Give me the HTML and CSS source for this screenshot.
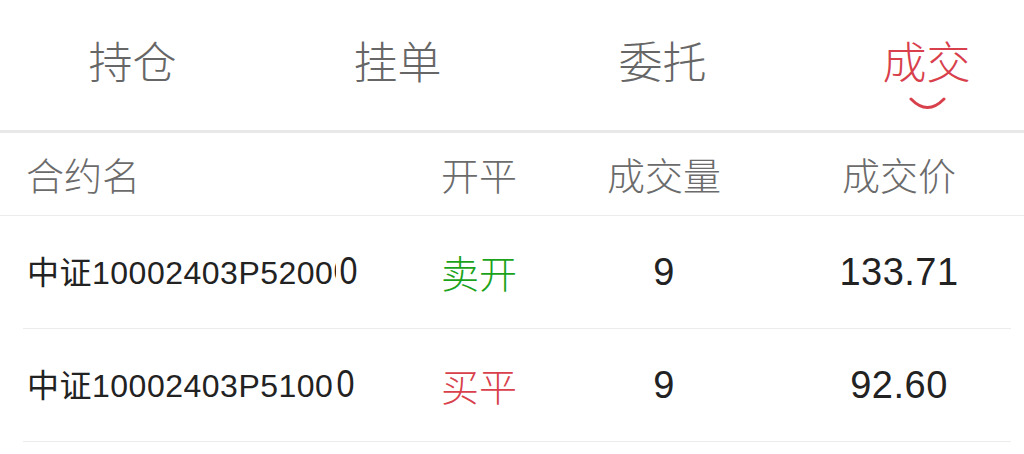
FILE: index.html
```html
<!DOCTYPE html>
<html lang="zh-CN">
<head>
<meta charset="utf-8">
<link rel="stylesheet" href="styles.css">
</head>
<body>
<div class="page">
  <nav class="tabs">
    <div class="tab">持仓</div>
    <div class="tab">挂单</div>
    <div class="tab">委托</div>
    <div class="tab active">成交
      <svg class="smile" width="37" height="14" viewBox="0 0 37 14"><path d="M2 3 Q18.5 20 35 3" fill="none" stroke="#d8404c" stroke-width="3" stroke-linecap="round"/></svg>
    </div>
  </nav>
  <div class="sep"></div>
  <div class="head">
    <div class="c1">合约名</div>
    <div class="cc">开平</div>
    <div class="cc">成交量</div>
    <div class="cc">成交价</div>
  </div>
  <div class="row">
    <div class="c1 name">中证10002403P5200<span class="clip">0</span><span class="big">0</span></div>
    <div class="cc cj green">卖开</div>
    <div class="cc num">9</div>
    <div class="cc num">133.71</div>
  </div>
  <div class="row">
    <div class="c1 name">中证10002403P5100<span class="big">0</span></div>
    <div class="cc cj red">买平</div>
    <div class="cc num">9</div>
    <div class="cc num">92.60</div>
  </div>
</div>
</body>
</html>
```

FILE: styles.css
```css
html, body {
  margin: 0;
  padding: 0;
  background: #fff;
  overflow: hidden;
}
body {
  font-family: "Liberation Sans", "Noto Sans CJK SC", sans-serif;
}
.page {
  width: 1024px;
  height: 454px;
  overflow: hidden;
}
.tabs {
  display: flex;
  height: 130px;
  width: 1060px;
}
.tab {
  width: 265px;
  flex: none;
  position: relative;
  text-align: center;
  font-family: "Noto Sans CJK SC", sans-serif;
  font-weight: 300;
  font-size: 44px;
  line-height: 44px;
  padding-top: 38px;
  color: #666;
  box-sizing: border-box;
}
.tab.active {
  color: #d8404c;
  padding-right: 2px;
}
.smile {
  position: absolute;
  left: 50%;
  top: 96px;
  margin-left: -19px;
}
.sep {
  height: 3px;
  background: #e8e8e8;
}
.head {
  display: grid;
  grid-template-columns: 417px 124px 246px 224px;
  height: 82px;
  align-items: center;
  border-bottom: 1px solid #ececec;
  font-family: "Noto Sans CJK SC", sans-serif;
  font-weight: 300;
  font-size: 38px;
  line-height: 40px;
  color: #6b6b6b;
}
.head .c1 {
  padding-left: 26px;
}
.cc {
  text-align: center;
}
.row {
  display: grid;
  grid-template-columns: 394px 124px 246px 224px;
  margin: 0 13px 0 23px;
  height: 112px;
  align-items: center;
  border-bottom: 1px solid #ececec;
  color: #222;
}
.name {
  padding-left: 4px;
  font-size: 32px;
  line-height: 40px;
  white-space: nowrap;
  overflow: hidden;
  letter-spacing: 0.5px;
}
.clip {
  display: inline-block;
  width: 3px;
  overflow: hidden;
  vertical-align: top;
}
.big {
  display: inline-block;
  font-size: 38px;
  transform: scaleX(0.85);
  margin-left: 2px;
}
.cj {
  font-family: "Noto Sans CJK SC", sans-serif;
  font-weight: 300;
  font-size: 38px;
  line-height: 40px;
}
.green { color: #1aa31a; }
.red { color: #d8404c; }
.num {
  font-size: 38px;
  line-height: 42px;
  letter-spacing: 0.5px;
  color: #222;
}
```
